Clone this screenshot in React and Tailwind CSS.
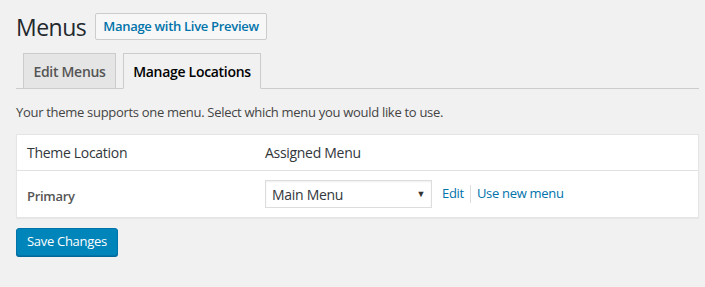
const FONT = "font-['Open_Sans','Noto_Sans',sans-serif]";

export default function App() {
  return (
    <div className={`min-h-[287px] w-[705px] bg-[#f1f1f1] pl-4 pr-[6px] ${FONT} text-[13px] tracking-[-0.3px] text-[#444]`}>
      {/* Heading */}
      <div className="flex items-center gap-[9px] pt-[13px]">
        <h1 className="text-[23px] font-normal leading-[26px] tracking-[-0.5px] text-[#23282d]">Menus</h1>
        <button className="h-[27px] rounded-[2px] border border-[#ccc] bg-[#f7f7f7] px-[7px] text-[13px] font-semibold text-[#0073aa]">
          Manage with Live Preview
        </button>
      </div>

      {/* Tabs */}
      <div className="mt-[13px] flex items-end gap-[7px] border-b border-[#ccc] pl-[7px]">
        <div className="-mb-px flex h-[36px] w-[93px] items-center justify-center border border-[#ccc] bg-[#e5e5e5] text-[14px] font-semibold text-[#555]">
          Edit Menus
        </div>
        <div className="-mb-px flex h-[36px] w-[138px] items-center justify-center border border-[#ccc] border-b-[#f1f1f1] bg-[#f1f1f1] text-[14px] font-semibold text-black">
          Manage Locations
        </div>
      </div>

      <p className="mt-[14px] leading-[19px]">Your theme supports one menu. Select which menu you would like to use.</p>

      {/* Table */}
      <div className="mt-[12px] border border-[#e5e5e5] bg-white shadow-[0_1px_1px_rgba(0,0,0,0.04)]">
        <div className="flex h-[36px] items-center border-b border-[#e1e1e1] text-[14px] text-[#32373c]">
          <div className="w-[248px] pl-[10px]">Theme Location</div>
          <div>Assigned Menu</div>
        </div>
        <div className="flex h-[46px] items-center">
          <div className="mt-[5px] w-[248px] pl-[10px] font-semibold text-[#555]">Primary</div>
          <div className="flex items-center">
            <div className="relative flex h-[28px] w-[167px] items-center border border-[#ddd] bg-white pl-[6px] text-[14px] text-[#32373c] shadow-[inset_0_1px_2px_rgba(0,0,0,0.07)]">
              Main Menu
              <span className="absolute right-[6px] top-[6px] text-[9px] text-[#333]">▼</span>
            </div>
            <a className="ml-[10px] text-[#0073aa]">Edit</a>
            <span className="mx-[6px] h-[18px] w-px bg-[#ddd]" />
            <a className="text-[#0073aa]">Use new menu</a>
          </div>
        </div>
      </div>

      <button className="mt-[10px] h-[28px] rounded-[3px] border border-[#0073aa] bg-[#0085ba] px-[10px] text-[13px] text-white shadow-[0_1px_0_#006799]">
        Save Changes
      </button>
    </div>
  );
}
